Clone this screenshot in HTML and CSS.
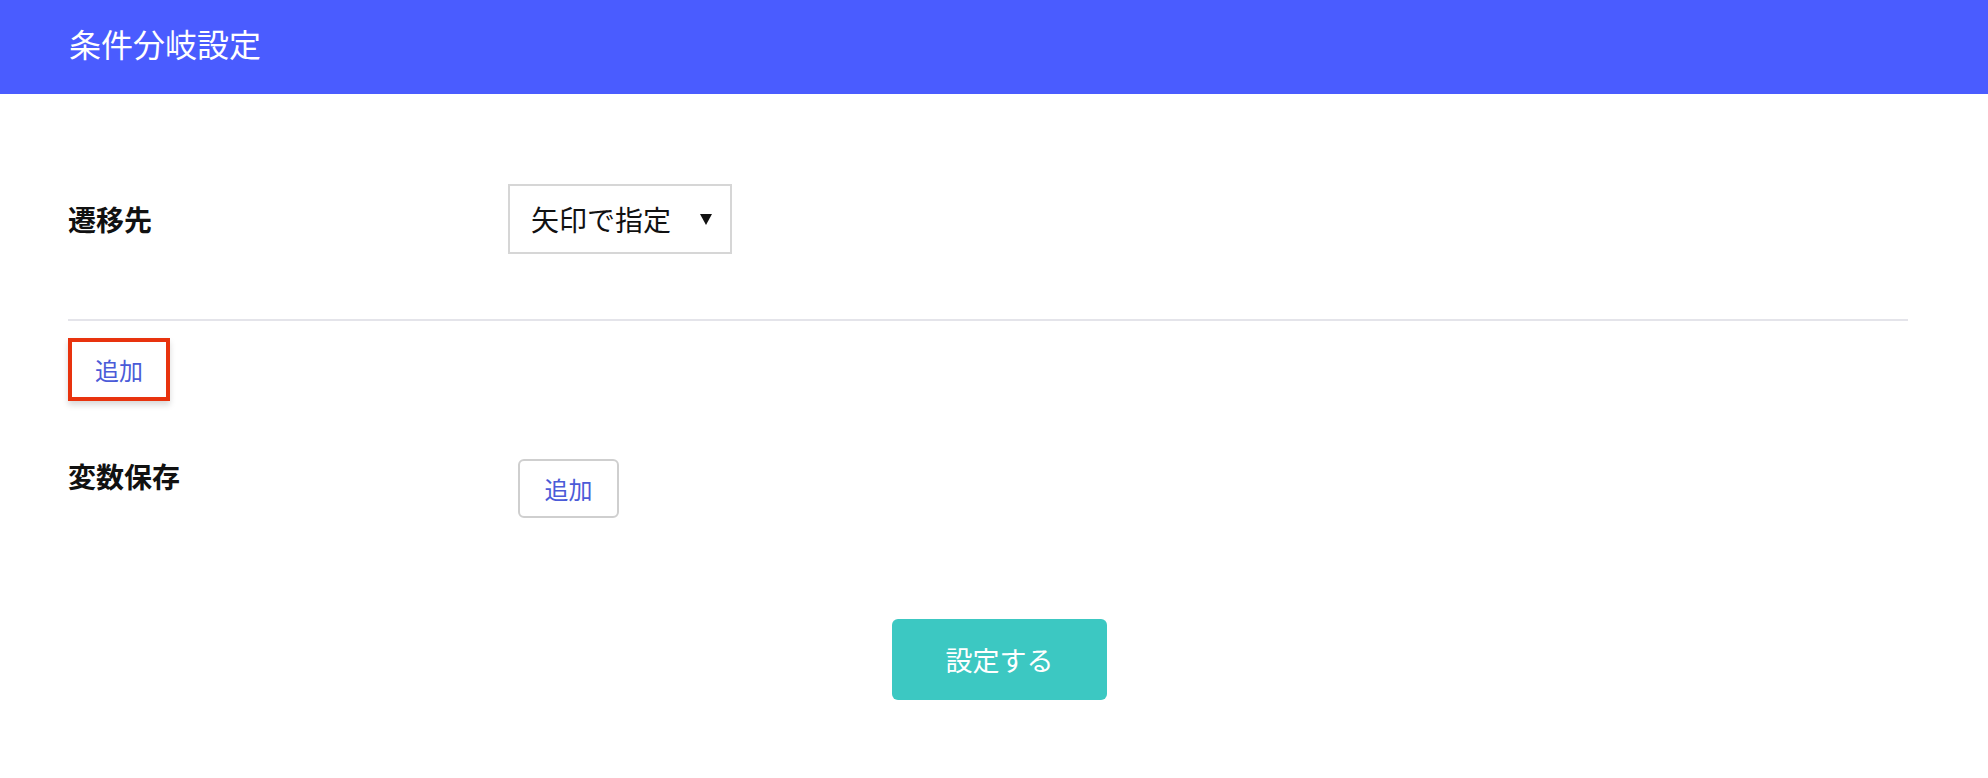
FILE: index.html
```html
<!DOCTYPE html>
<html lang="ja">
<head>
    <meta charset="UTF-8">
    <meta name="viewport" content="width=device-width, initial-scale=1.0">
    <title>条件分岐設定</title>
    <link rel="stylesheet" href="styles.css">
</head>
<body>
    <header class="header">
        <h1 class="header-title">条件分岐設定</h1>
    </header>
    <main class="content">
        <div class="field field-center">
            <div class="field-label">遷移先</div>
            <div class="select-box">
                <span>矢印で指定</span>
                <span class="select-arrow"></span>
            </div>
        </div>
        <hr class="divider">
        <button class="btn-add btn-highlight">追加</button>
        <div class="field field-top">
            <div class="field-label">変数保存</div>
            <button class="btn-add btn-outline">追加</button>
        </div>
        <div class="actions">
            <button class="btn-submit">設定する</button>
        </div>
    </main>
</body>
</html>
```

FILE: styles.css
```css
body {
    margin: 0;
    font-family: "Noto Sans CJK JP", "Noto Sans", sans-serif;
    background-color: #fff;
    color: #111;
}
.header {
    height: 94px;
    background-color: #4a5cff;
    display: flex;
    align-items: center;
    padding-left: 69px;
    box-sizing: border-box;
}
.header-title {
    margin: 0 0 9px 0;
    font-size: 32px;
    font-weight: 400;
    line-height: 1;
    color: #fff;
}
.content {
    padding: 0 80px 0 68px;
}
.field {
    display: flex;
}
.field-center {
    align-items: center;
    margin-top: 90px;
}
.field-top {
    align-items: flex-start;
    margin-top: 58px;
}
.field-label {
    width: 440px;
    font-size: 28px;
    font-weight: 700;
    line-height: 1;
}
.field-top .field-label {
    margin-top: 3px;
}
.select-box {
    width: 224px;
    height: 70px;
    box-sizing: border-box;
    border: 2px solid #d6d6d6;
    display: flex;
    align-items: center;
    justify-content: space-between;
    padding: 0 18px 0 21px;
    font-size: 28px;
    line-height: 1;
}
.select-arrow {
    width: 0;
    height: 0;
    border-left: 6px solid transparent;
    border-right: 6px solid transparent;
    border-top: 11px solid #111;
}
.divider {
    margin: 65px 0 0 0;
    border: none;
    height: 2px;
    background-color: #e4e4ea;
}
.btn-add {
    font-family: inherit;
    font-size: 24px;
    line-height: 1;
    color: #4b5bd8;
    background-color: #fff;
    cursor: pointer;
    padding: 0;
}
.btn-highlight {
    display: block;
    margin-top: 17px;
    width: 102px;
    height: 63px;
    border: 4px solid #e8330e;
    box-shadow: 0 4px 6px rgba(0, 0, 0, 0.15);
}
.btn-outline {
    margin-left: 10px;
    width: 101px;
    height: 59px;
    border: 2px solid #cfcfcf;
    border-radius: 6px;
}
.actions {
    display: flex;
    justify-content: center;
    margin-top: 101px;
    padding-left: 23px;
}
.btn-submit {
    width: 215px;
    height: 81px;
    border: none;
    border-radius: 6px;
    background-color: #3cc8c2;
    color: #fff;
    font-family: inherit;
    font-size: 27px;
    line-height: 1;
    cursor: pointer;
}
```
